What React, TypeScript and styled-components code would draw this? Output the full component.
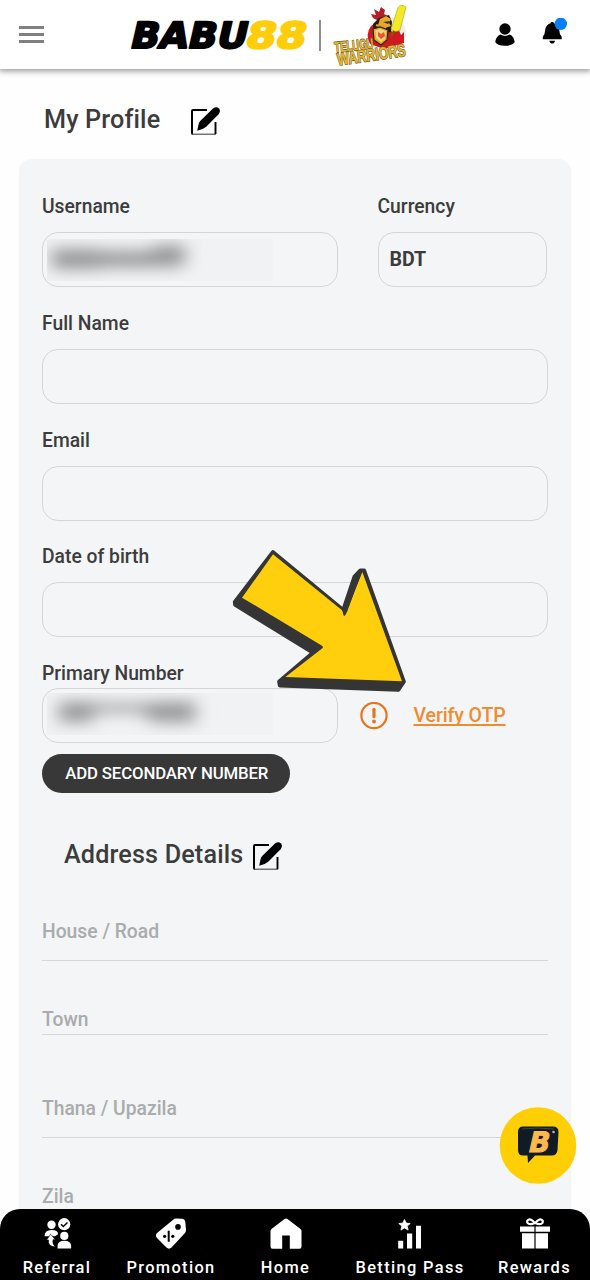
import React from "react";
import styled, { createGlobalStyle } from "styled-components";

const Global = createGlobalStyle`
  * { box-sizing: border-box; }
  body { margin: 0; background: #fefefe; font-family: Roboto, "Liberation Sans", sans-serif; }
`;

const Page = styled.div`
  position: relative;
  width: 590px;
  height: 1280px;
  overflow: hidden;
  background: #fefefe;
  color: #3c3c3c;
`;

const Header = styled.header`
  position: relative;
  display: flex;
  align-items: center;
  height: 69px;
  padding: 0 22px 0 19px;
  background: #fff;
  box-shadow: 0 1px 6px 1px rgba(0, 0, 0, 0.42);
`;

const MenuButton = styled.div`
  display: flex;
  flex-direction: column;
  gap: 4.6px;
  width: 25px;
  margin-right: 86px;
`;

const MenuLine = styled.span`
  height: 2.5px;
  background: #808080;
`;

const Brand = styled.svg<{ $gap?: number }>`
  display: block;
  flex: none;
  margin-left: ${(p) => p.$gap ?? 0}px;
  overflow: visible;
`;

const HeaderIcons = styled.div`
  display: flex;
  align-items: center;
  margin-left: auto;
`;

const TitleRow = styled.div<{ $address?: boolean }>`
  display: flex;
  align-items: center;
  height: 28px;
  gap: ${(p) => (p.$address ? "10px" : "31px")};
  margin: ${(p) => (p.$address ? "47px 0 0 22px" : "36px 0 26px 44px")};
`;

const Title = styled.h2`
  margin: 1px 0 0;
  font-size: 25.2px;
  line-height: 28px;
  font-weight: 500;
  letter-spacing: 0.15px;
  white-space: nowrap;
`;

const Card = styled.main`
  width: 550px;
  height: 1121px;
  margin-left: 20px;
  padding: 36px 22.5px 0 22px;
  border-radius: 12px;
  background: #f3f5f6;
  box-shadow: 0 1px 2px rgba(0, 0, 0, 0.16);
`;

const Row = styled.div`
  display: flex;
  gap: 40px;
`;

const Field = styled.div<{ $width?: number }>`
  width: ${(p) => (p.$width ? `${p.$width}px` : "auto")};
  height: 116.75px;
`;

const Label = styled.div<{ $tight?: boolean }>`
  height: 22px;
  margin-bottom: ${(p) => (p.$tight ? 4 : 15)}px;
  font-size: 19.3px;
  line-height: 23px;
  font-weight: 500;
  letter-spacing: 0;
  white-space: nowrap;
`;

const Input = styled.div<{ $width?: number }>`
  display: flex;
  align-items: center;
  width: ${(p) => (p.$width ? `${p.$width}px` : "100%")};
  height: 55px;
  padding-left: 4px;
  border: 1.5px solid #d4d6d6;
  border-radius: 16px;
`;

const Value = styled.span`
  padding: 0 0 1px 7px;
  font-size: 19.6px;
  font-weight: 700;
  letter-spacing: -0.1px;
`;

const Redacted = styled.div<{ $lift?: boolean }>`
  width: 226px;
  height: 42px;
  margin-top: ${(p) => (p.$lift ? -3 : 1)}px;
  overflow: hidden;
  background: #f1f2f3;
`;

const PhoneRow = styled.div`
  display: flex;
  align-items: center;
`;

const Warning = styled.svg`
  margin-left: 22.5px;
`;

const VerifyLink = styled.a`
  margin: 1px 0 0 25.5px;
  color: #ef8c2f;
  font-size: 19.5px;
  line-height: 22px;
  font-weight: 500;
  letter-spacing: -0.1px;
  text-decoration: underline;
  text-decoration-thickness: 1.5px;
  text-underline-offset: 2px;
  text-decoration-skip-ink: none;
`;

const AddButton = styled.button`
  display: block;
  width: 247.5px;
  height: 39px;
  margin-top: 11px;
  padding: 0 0 1px 2px;
  border: 0;
  border-radius: 20px;
  background: #383838;
  color: #fff;
  font: 500 16.8px Roboto, sans-serif;
  letter-spacing: -0.15px;
  white-space: nowrap;
`;

const LineField = styled.div<{ $height: number; $bottom: number }>`
  display: flex;
  align-items: flex-end;
  height: ${(p) => p.$height}px;
  padding-bottom: ${(p) => p.$bottom}px;
  border-bottom: 1.5px solid #d4d6d7;
  color: #a9abac;
  font-size: 19.3px;
  line-height: 22px;
  font-weight: 500;
`;

const ChatButton = styled.div`
  position: absolute;
  left: 499px;
  top: 1107px;
  width: 78px;
  height: 78px;
`;

const Nav = styled.nav`
  position: absolute;
  left: 0;
  bottom: 0;
  display: grid;
  grid-template-columns: 112px 116px 113px 136px 113px;
  width: 590px;
  height: 71.5px;
  padding: 9px 0 0 1px;
  border-radius: 20px 20px 0 0;
  background: #000;
`;

const NavItem = styled.div`
  display: flex;
  flex-direction: column;
  align-items: center;
  gap: 8px;
  color: #fff;
`;

const NavLabel = styled.span`
  font-size: 16.4px;
  line-height: 20px;
  font-weight: 500;
  letter-spacing: 1.35px;
  white-space: nowrap;
`;

const EditSvg = styled.svg`
  display: block;
  margin: 3px 0 0 -1px;
`;

const BellSvg = styled.svg`
  margin: -4px 0 0 25px;
`;

const EditIcon = () => (
  <EditSvg width="30" height="30" viewBox="0 0 30 30">
    <path d="M17 4H3Q2 4 2 5V27Q2 28 3 28" fill="none" stroke="#000" strokeWidth="2" />
    <path d="M2 28.2H26" stroke="#444" strokeWidth="1.1" />
    <path d="M25.5 28V16" stroke="#000" strokeWidth="1.9" />
    <path d="M7.2 24.8L8.6 18Q9.2 16 10.2 15L23 2.6Q26.2 0 29 2.4Q31 5.4 28.6 8.2L16.2 20.8Q13 23.6 7.2 24.8Z" fill="#000" />
  </EditSvg>
);

const BabuLogo = () => (
  <Brand width="192" height="40" viewBox="0 0 192 40">
    <g fontFamily="'DejaVu Sans', sans-serif" fontWeight="700" fontSize="36" strokeWidth="2.2" strokeLinejoin="round" transform="translate(0 32.5) skewX(-13)">
      <text x="-1.2" y="0" textLength="116.5" lengthAdjust="spacingAndGlyphs" fill="#000" stroke="#000">BABU</text>
      <text x="114" y="0" textLength="60" lengthAdjust="spacingAndGlyphs" fill="#ffce0a" stroke="#ffce0a">88</text>
    </g>
    <path d="M190 5V36" stroke="#555" strokeWidth="1.3" />
  </Brand>
);

const WarriorsLogo = () => (
  <Brand $gap={10} width="80" height="64" viewBox="332 2 80 64">
    <circle cx="390" cy="32" r="16" fill="#efebeb" />
    <path d="M371 25Q365 33 370 43L384 48L404 42L404 31L401 34L398 27L392 31L387 23L378 20Z" fill="#cf1820" />
    <path d="M379 20L373 17L371 13L376 14L374 8L379 11L381 6L385 9L384 13L388 15L382 17Z" fill="#b51d28" />
    <path d="M373 23L379 17L389 14L392 21L391 31L374 32Z" fill="#201a13" />
    <path d="M380 18L386 15L391 18L389 22L391 25L385 27L378 24Z" fill="#e8ab20" />
    <path d="M383 21L390 20L388 23Z" fill="#422f13" />
    <path d="M376 24L386 27" stroke="#d8a126" strokeWidth="2.2" />
    <path d="M373 28L380 26L388 29L387 39L381 44L374 39Z" fill="#e4ad29" stroke="#332310" strokeWidth="1.2" />
    <path d="M375.5 29.5L380 28L386 30L385 38L381 41L376 37Z" fill="#f4d386" />
    <path d="M378 31L381 33L384 31L385 35L381 38L378 35Z" fill="#e95725" />
    <path d="M398 6.5Q401 2.5 406 6L400 29Q396 32 391 28.5Z" fill="#f5e923" stroke="#a6a117" strokeWidth=".6" />
    <path d="M394 30L391 36" stroke="#725d12" strokeWidth="2" />
    <g fontFamily="'Liberation Sans', sans-serif" fontWeight="700" fill="#dfb52e" stroke="#6b521a" strokeWidth="1.2" paintOrder="stroke">
      <text transform="translate(335 51.5) rotate(-6)" fontSize="15" textLength="39" lengthAdjust="spacingAndGlyphs">TELUGU</text>
      <text transform="translate(338 64.5) rotate(-8)" fontSize="17.5" textLength="69" lengthAdjust="spacingAndGlyphs">WARRIORS</text>
    </g>
  </Brand>
);

const UserIcon = () => (
  <svg width="22" height="24" viewBox="0 0 22 24">
    <circle cx="11" cy="6" r="5.7" />
    <path d="M1.2 19Q2 13.2 6.5 11.5Q11 14.3 15.5 11.5Q20 13.2 20.7 19Q19 22.5 11 22.8Q3 22.5 1.2 19Z" />
  </svg>
);

const BellIcon = () => (
  <BellSvg width="27" height="29" viewBox="-1 0 27 29">
    <path d="M8.6 5.3Q8.5 4 10.2 4T11.9 5.3Q17.2 7 17.4 13Q17.4 16.5 19.7 18.7V21.2H.8V18.7Q3 16.5 3 13Q3.4 7 8.6 5.3ZM7.4 22.7H13Q12.6 25.5 10.2 25.5T7.4 22.7Z" />
    <circle cx="18.8" cy="5.8" r="6.2" fill="#087ff5" />
  </BellSvg>
);

const BlurredValue = ({ phone }: { phone?: boolean }) => (
  <Redacted $lift={phone}>
    <svg width="226" height="42">
      <defs>
        <filter id={phone ? "phone-blur" : "name-blur"} colorInterpolationFilters="sRGB" filterUnits="userSpaceOnUse" x="-40" y="-40" width="280" height="120">
          <feGaussianBlur stdDeviation="9 7.5" />
        </filter>
      </defs>
      <g filter={`url(#${phone ? "phone-blur" : "name-blur"})`} fill="#969798">
        {phone ? (
          <path d="M12 9H48V11H104V9H148V29H106L94 19H46V29H12Z" />
        ) : (
          <path d="M4 10H52V12H100L112 6H138V26L126 28H58L48 30H6Z" />
        )}
      </g>
    </svg>
  </Redacted>
);

const PointerArrow = styled.svg`
  position: absolute;
  left: 230px;
  top: 547px;
`;

const Arrow = () => (
  <PointerArrow width="179" height="148" viewBox="30 21 537 444">
    <path d="M159 37L370 211L404 110L421 92L432 92L551 425L535 449L180 436L178 425L280 338L46 194L45 186Z" fill="#353535" stroke="#353535" strokeWidth="13" strokeLinejoin="round" />
    <path d="M159 43L366 211L373 220L381 210L427 96L546 424L196 411L307 325Q311 321 306 317L66 173Z" fill="#ffce0d" />
    <path d="M373 224L370 211L402 113L423 94L379 213Z" fill="#353535" stroke="#353535" strokeWidth="6" strokeLinejoin="round" />
  </PointerArrow>
);

const ReferralIcon = () => (
  <svg width="30" height="32" viewBox="0 0 30 32" fill="#fff">
    <circle cx="9.5" cy="6.8" r="4.2" />
    <path d="M2.5 18.3Q2.7 12 9.5 12T16 16.3L13 18.3Z" />
    <circle cx="22.2" cy="6.2" r="6.1" />
    <path d="M19 6.2L21.3 8.5L25.5 4.5" fill="none" stroke="#000" strokeWidth="1.5" />
    <circle cx="22.3" cy="17.9" r="4.1" />
    <path d="M15.6 30.5V27.5Q15.9 22.8 22.3 22.8T29.1 27.5V30.5Z" />
    <path d="M4.5 22L8.7 16.2L13.3 21.7H11Q10 25.5 13.3 29Q5.5 28.2 6.5 22Z" stroke="#000" strokeWidth=".6" />
  </svg>
);

const PromotionIcon = () => (
  <svg width="32" height="32" viewBox="0 0 32 32">
    <path d="M18.5 1.4Q19.2.4 21 .4L27 .8Q30 1.1 30.3 4.1L31 11.5Q31.2 14 29.5 15.5L16.5 29.5Q14 31.8 11.5 29.5L2 20Q-.1 17.5 2 15Z" fill="#fff" />
    <circle cx="23" cy="8.9" r="2.8" />
    <path d="M13.7 12.7V23.8" stroke="#000" strokeWidth="2" />
    <circle cx="9.6" cy="18.3" r="1.6" /><circle cx="17.8" cy="18.3" r="1.6" />
  </svg>
);

const HomeIcon = () => (
  <svg width="32" height="32" viewBox="0 0 32 32">
    <path d="M.5 12.8Q.5 11.7 1.5 10.9L14.5 1Q16 -.2 17.5 1L30.5 10.9Q31.5 11.7 31.5 12.8V28.5Q31.5 30.7 29.5 30.7H19.8V17.5H12.2V30.7H2.5Q.5 30.7 .5 28.5Z" fill="#fff" />
  </svg>
);

const BettingIcon = () => (
  <svg width="26" height="32" viewBox="0 0 26 32" fill="#fff">
    <path d="M7.5 1.5L9.2 5.1L13.2 5.5L10.2 8.1L11.1 12.1L7.5 9.9L3.9 12.1L4.8 8.1L1.8 5.5L5.8 5.1Z" stroke="#fff" strokeWidth=".8" />
    <path d="M1.2 22.7H6.2V30.5H1.2ZM10 15.5H15.2V30.5H10ZM19 7.8H24V30.5H19Z" />
  </svg>
);

const RewardsIcon = () => (
  <svg width="32" height="32" viewBox="0 0 32 32">
    <path d="M1 8.5H15.4V13.7H1ZM16.6 8.5H31V13.7H16.6ZM3 15.3H15.4V30.5H3ZM16.6 15.3H29V30.5H16.6Z" fill="#fff" />
    <path d="M15.8 5Q12.2 1 10 1.5Q7.5 2.5 8.5 4.8Q10.5 7.4 15.8 5ZM16.2 5Q19.8 1 22 1.5Q24.5 2.5 23.5 4.8Q21.5 7.4 16.2 5Z" fill="none" stroke="#fff" strokeWidth="2.2" />
  </svg>
);

const navItems = [
  { name: "Referral", Icon: ReferralIcon },
  { name: "Promotion", Icon: PromotionIcon },
  { name: "Home", Icon: HomeIcon },
  { name: "Betting Pass", Icon: BettingIcon },
  { name: "Rewards", Icon: RewardsIcon },
];

export default function App() {
  return (
    <Page>
      <Global />
      <Header>
        <MenuButton><MenuLine /><MenuLine /><MenuLine /></MenuButton>
        <BabuLogo />
        <WarriorsLogo />
        <HeaderIcons><UserIcon /><BellIcon /></HeaderIcons>
      </Header>
      <TitleRow><Title>My Profile</Title><EditIcon /></TitleRow>
      <Card>
        <Row>
          <Field $width={295.5}><Label>Username</Label><Input><BlurredValue /></Input></Field>
          <Field $width={169}><Label>Currency</Label><Input><Value>BDT</Value></Input></Field>
        </Row>
        {["Full Name", "Email", "Date of birth"].map((name) => (
          <Field key={name}><Label>{name}</Label><Input /></Field>
        ))}
        <Label $tight>Primary Number</Label>
        <PhoneRow>
          <Input $width={295.5}><BlurredValue phone /></Input>
          <Warning width="28" height="28" viewBox="0 0 28 28">
            <circle cx="14" cy="13.5" r="12.6" fill="none" stroke="#e6751b" strokeWidth="2.2" />
            <path d="M14 7.3V14.7" stroke="#e6751b" strokeWidth="3.2" strokeLinecap="round" />
            <circle cx="14" cy="19.5" r="1.9" fill="#e6751b" />
          </Warning>
          <VerifyLink>Verify OTP</VerifyLink>
        </PhoneRow>
        <AddButton>ADD SECONDARY NUMBER</AddButton>
        <TitleRow $address><Title>Address Details</Title><EditIcon /></TitleRow>
        <LineField $height={93} $bottom={17}>House / Road</LineField>
        <LineField $height={74} $bottom={3}>Town</LineField>
        <LineField $height={103} $bottom={17}>Thana / Upazila</LineField>
        <LineField $height={103} $bottom={32}>Zila</LineField>
      </Card>
      <Arrow />
      <ChatButton>
        <svg width="78" height="78" viewBox="0 0 78 78">
          <circle cx="39" cy="38.5" r="38.3" fill="#ffcf05" />
          <path d="M24 19.5H54Q59.5 19.5 59.5 25L58.5 43Q58 48.5 52.5 48.5H36L29 56L28.5 48.5H24Q19 48.5 19 43V25Q19 19.5 24 19.5Z" fill="#111b24" />
          <path d="M23 22Q38 20 55 22" fill="none" stroke="#394650" strokeWidth="1" />
          <circle cx="54.5" cy="25" r="1.3" fill="#a9b5bb" />
          <text transform="translate(28 44.5) skewX(-13)" fontFamily="'DejaVu Sans', sans-serif" fontWeight="700" fontSize="28" textLength="21" lengthAdjust="spacingAndGlyphs" fill="#fdb94b" stroke="#fdb94b" strokeWidth="1">B</text>
        </svg>
      </ChatButton>
      <Nav>
        {navItems.map(({ name, Icon }) => (
          <NavItem key={name}><Icon /><NavLabel>{name}</NavLabel></NavItem>
        ))}
      </Nav>
    </Page>
  );
}
